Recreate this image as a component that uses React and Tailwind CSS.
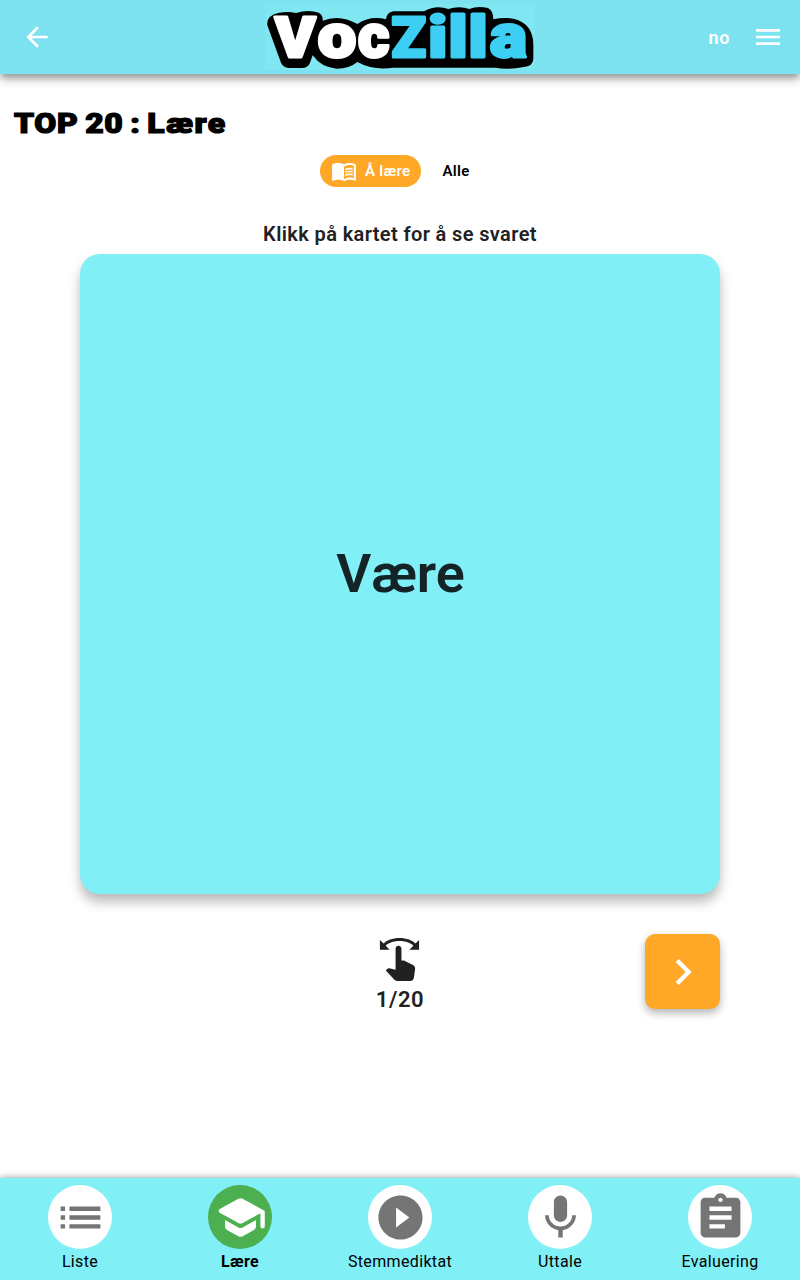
import React from "react";
import {
  MdArrowBack, MdMenu, MdMenuBook, MdChevronRight, MdSwipe,
  MdList, MdPlayCircleFilled, MdMic, MdAssignment,
} from "react-icons/md";

const LETTERS = [
  { ch: "V", x: 10, w: 40.5, size: 56, fill: "#ffffff" },
  { ch: "o", x: 52.8, w: 38.5, size: 61, fill: "#ffffff" },
  { ch: "c", x: 93, w: 31.5, size: 61, fill: "#ffffff" },
  { ch: "Z", x: 126.5, w: 34.5, size: 56, fill: "#3dcff3" },
  { ch: "i", x: 163.3, w: 19, size: 58, fill: "#3dcff3" },
  { ch: "l", x: 183.6, w: 19, size: 58, fill: "#3dcff3" },
  { ch: "l", x: 203.6, w: 19, size: 58, fill: "#3dcff3" },
  { ch: "a", x: 225, w: 37, size: 61, fill: "#3dcff3" },
];

function Logo() {
  return (
    <svg width="270" height="66" viewBox="0 0 270 66" aria-label="VocZilla" className="overflow-visible bg-[#80e6f1]">
      <path
        transform="translate(-5 -4) scale(.33333)"
        d="M22 76Q18 46 58 38Q84 33 108 39Q145 28 176 38Q190 46 188 62Q240 42 292 72Q332 46 378 58Q380 37 400 34L492 34Q528 14 565 27Q598 16 628 27Q652 17 684 24Q700 32 700 58Q762 44 798 75Q820 96 820 134L820 178Q818 200 792 201Q745 210 705 203L400 203Q340 212 292 186Q268 206 230 206Q184 203 158 166L150 188Q144 204 125 204L86 204Q70 203 63 188Z"
      />
      {LETTERS.map((l, i) => (
        <text
          key={i}
          x={l.x}
          y="52.5"
          fontSize={l.size}
          textLength={l.w}
          lengthAdjust="spacingAndGlyphs"
          fill={l.fill}
          stroke={l.fill}
          strokeWidth="3"
          strokeLinejoin="round"
          className="font-['Roboto',sans-serif] font-black"
        >
          {l.ch}
        </text>
      ))}
    </svg>
  );
}

function School({ className }) {
  return (
    <svg viewBox="0 0 24 24" fill="currentColor" className={className}>
      <path d="M5 13.18v2.81c0 .73.4 1.41 1.04 1.76l5 2.73c.6.33 1.32.33 1.92 0l5-2.73c.64-.35 1.04-1.03 1.04-1.76v-2.81l-6.04 3.3c-.6.33-1.32.33-1.92 0L5 13.18zm6.04-9.66l-8.43 4.6c-.69.38-.69 1.38 0 1.76l8.43 4.6c.6.33 1.32.33 1.92 0L21 10.09V16c0 .55.45 1 1 1s1-.45 1-1V9.59c0-.37-.2-.7-.52-.88l-9.52-5.19c-.6-.32-1.32-.32-1.92 0z" />
    </svg>
  );
}

const TABS = [
  { label: "Liste", Icon: MdList },
  { label: "Lære", Icon: School, active: true },
  { label: "Stemmediktat", Icon: MdPlayCircleFilled },
  { label: "Uttale", Icon: MdMic },
  { label: "Evaluering", Icon: MdAssignment },
];

export default function App() {
  return (
    <div className="flex h-[1280px] w-[800px] flex-col overflow-hidden bg-white font-['Roboto',sans-serif] text-[#212121]">
      <header className="grid h-[74px] shrink-0 grid-cols-[265px_270px_1fr] items-center bg-[#7de2f0] text-white shadow-[0_5px_6px_-1px_rgba(0,0,0,0.28),0_6px_10px_rgba(0,0,0,0.16)]">
        <MdArrowBack className="ml-[21px] size-8" />
        <Logo />
        <div className="flex items-center justify-end pr-4">
          <span className="mr-[22px] text-[18px] font-semibold tracking-[0.6px]">no</span>
          <MdMenu className="size-8" />
        </div>
      </header>

      <main className="flex flex-1 flex-col">
        <h1 className="mt-[33px] ml-[14px] h-[34px] w-[170px] origin-left scale-x-[1.18] text-[27px] leading-[34px] font-black tracking-[0.55px] [word-spacing:-1.5px] whitespace-nowrap text-black [-webkit-text-stroke:1.2px_black]">
          TOP 20 : <span className="tracking-[1.3px]">Lære</span>
        </h1>

        <div className="mt-[12.5px] ml-[320px] flex h-[33.5px] items-center pt-px text-[15px] font-semibold tracking-[0.3px] text-black">
          <button className="flex h-8 w-[101px] items-center rounded-full bg-[#ffa726] pl-[11px] text-white">
            <MdMenuBook className="mr-2 size-[26px]" />
            <span>Å lære</span>
          </button>
          <button className="ml-[21.5px]">Alle</button>
        </div>

        <p className="mt-[34px] text-center text-[20px] leading-[26px] font-semibold tracking-[0.38px]">
          Klikk på kartet for å se svaret
        </p>
        <div className="mx-auto mt-[7px] flex size-[640px] items-center justify-center rounded-[20px] bg-[#80eff6] pb-0.5 pl-px text-[54px] font-semibold text-[#142326] shadow-[0_8px_12px_rgba(0,0,0,0.27)]">
          Være
        </div>

        <div className="mx-20 mt-10 grid grid-cols-[1fr_auto_1fr] items-start">
          <span />
          <div className="flex flex-col items-center">
            <MdSwipe className="mt-0.5 mr-0.5 size-[47px]" />
            <span className="mt-[3px] text-[22px] leading-7 font-semibold tracking-[0.6px]">1/20</span>
          </div>
          <button className="flex size-[75px] items-center justify-center justify-self-end rounded-[10px] bg-[#ffa726] text-white shadow-[0_4px_8px_rgba(0,0,0,0.3)]">
            <MdChevronRight className="size-[52px]" />
          </button>
        </div>
      </main>

      <nav className="grid h-[102px] shrink-0 grid-cols-5 bg-[#80eff6] pt-[7.4px] text-black shadow-[0_0_7px_rgba(0,0,0,0.45)]">
        {TABS.map(({ label, Icon, active }) => (
          <button key={label} className="flex flex-col items-center">
            <span className={active
              ? "flex size-16 items-center justify-center rounded-full bg-[#4caf50] text-white"
              : "flex size-16 items-center justify-center rounded-full bg-white text-[#757575]"}>
              <Icon className="size-[53px]" />
            </span>
            <span className={active ? "pt-px text-[16px] leading-6 font-bold tracking-[0.35px]" : "pt-px text-[16px] leading-6 tracking-[0.35px]"}>
              {label}
            </span>
          </button>
        ))}
      </nav>
    </div>
  );
}
